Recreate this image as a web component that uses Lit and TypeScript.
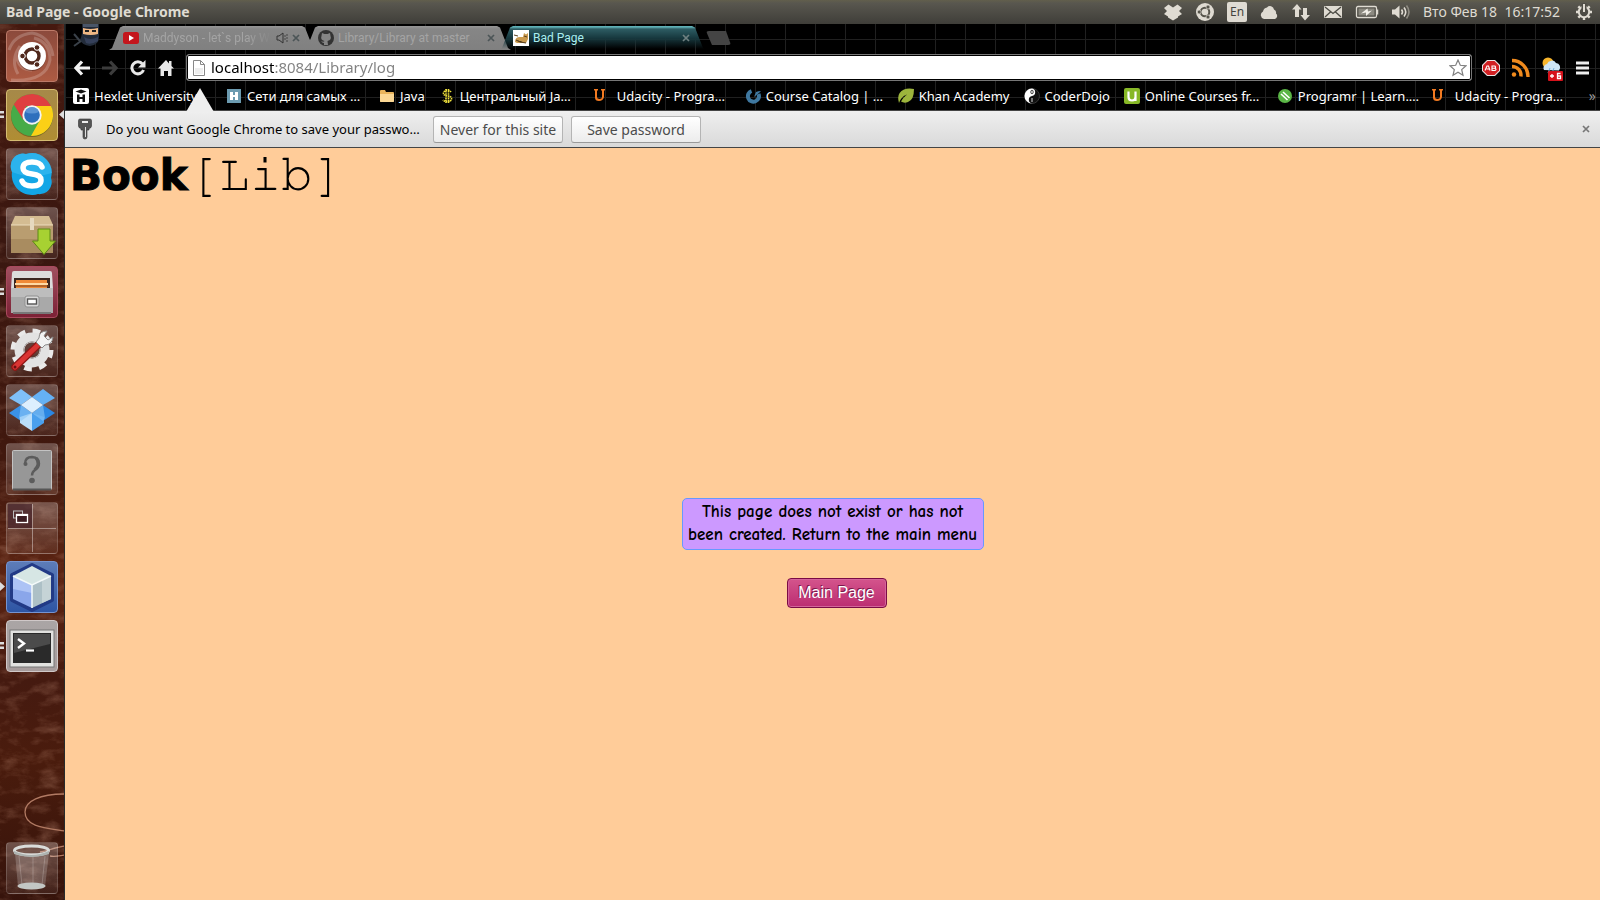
import { LitElement, html, css, svg } from "lit";
import { customElement } from "lit/decorators.js";
import { classMap } from "lit/directives/class-map.js";

const icon = (w: number, h: number, body: unknown, box = `0 0 ${w} ${h}`) =>
  html`<svg width=${w} height=${h} viewBox=${box} aria-hidden="true">${body}</svg>`;

/* ---------- top panel indicators ---------- */
const indicators = [
  { name: "Dropbox", art: icon(20, 24, svg`<g fill="#dfdbd2"><path d="m5.500 4.500 4.500 3 4.500-3 4.500 3.500-3 3 3 3-4 2.500v1L10 20.500l-5-3v-1L1 14l3-3-3-3z"/></g>`) },
  { name: "Ubuntu One", art: icon(20, 24, svg`<circle cx="10" cy="12" r="9" fill="#dfdbd2"/><circle cx="10" cy="12" r="4.300" fill="none" stroke="#55534a" stroke-width="2"/><g fill="#55534a" stroke="#dfdbd2" stroke-width=".7"><circle cx="4.200" cy="12" r="2"/><circle cx="13" cy="7" r="2"/><circle cx="13" cy="17" r="2"/></g>`) },
  { name: "Keyboard layout", art: html`<span class="lang">En</span>` },
  { name: "Cloud", art: icon(20, 24, svg`<path d="M5 19a4 4 0 0 1-1-7.500A5 5 0 0 1 8 7.500a4 4 0 0 1 7 2 3.500 3.500 0 0 1 2 4A3.200 3.200 0 0 1 16 19z" fill="#dfdbd2"/>`) },
  { name: "Network", art: icon(20, 24, svg`<path d="M6 4 10.500 9.500H8V17H4V9.500H1zM14 20.500 9.500 15H12V8h4v7h3z" fill="#dfdbd2"/>`) },
  { name: "Mail", art: icon(20, 24, svg`<rect x="1" y="6" width="18" height="12" rx="1" fill="#dfdbd2"/><path d="m2 7 8 6.500L18 7M2 17l6-5.500M18 17l-6-5.500" fill="none" stroke="#4b4a43" stroke-width="1.300"/>`) },
  { name: "Battery", art: icon(24, 24, svg`<rect x="1.500" y="6.500" width="20" height="11" rx="1.500" fill="none" stroke="#dfdbd2" stroke-width="1.300"/><path d="M22.500 9.500v5" stroke="#dfdbd2" stroke-width="1.500"/><rect x="3.500" y="8.500" width="16" height="7" fill="#8b8980"/><path d="m6 13.500 6.500-5 .5 3 4-1-6 5.500v-3.500z" fill="#f2efe8"/>`) },
  { name: "Sound", art: icon(20, 24, svg`<path d="M1 9.500h3L8.500 5.500v13L4 14.500H1z" fill="#dfdbd2"/><g fill="none" stroke="#dfdbd2" stroke-width="1.600"><path d="M10.500 9.500q2 2.500 0 5"/><path d="M13 7.500q3.500 4.500 0 9"/><path d="M15.500 5.500q5 6.500 0 13" stroke="#8f8c83"/></g>`) },
];

const gear = icon(20, 24, svg`<circle cx="10" cy="12" r="5.200" fill="none" stroke="#dfdbd2" stroke-width="2"/><g stroke="#dfdbd2" stroke-width="2.400"><path d="M10 20v-2.500M2 12h2.500M18 12h-2.500M4.300 6.300l1.800 1.800M15.700 6.300l-1.800 1.800M4.300 17.700l1.800-1.800M15.700 17.700l-1.800-1.800"/></g><path d="M10 3v9" stroke="#4f4d46" stroke-width="5"/><path d="M10 4v8" stroke="#dfdbd2" stroke-width="2"/>`);

/* ---------- launcher ---------- */
const launcher = [
  { name: "Dash home", tone: "dash", run: 0, art: svg`
    <path d="M3 20Q8 5 26 3 44 6 47 26M12 44Q4 30 14 16M26 40q-14 0-16-16" fill="none" stroke="#fff" stroke-opacity=".2" stroke-width="3"/>
    <path d="M5 50Q40 52 44 30 44 12 28 8" fill="none" stroke="#fff" stroke-opacity=".2" stroke-width="3"/>
    <circle cx="26" cy="27" r="14" fill="#4a2018" opacity=".5"/><circle cx="26" cy="26" r="14" fill="#fff"/>
    <circle cx="26" cy="26" r="7" fill="none" stroke="#50281c" stroke-width="3.400"/>
    <g fill="#50281c" stroke="#fff" stroke-width="1"><circle cx="16.500" cy="26" r="2.800"/><circle cx="31" cy="17.500" r="2.800"/><circle cx="31" cy="34.500" r="2.800"/></g>` },
  { name: "Google Chrome", tone: "gold", run: 2, art: svg`
    <circle cx="26" cy="27" r="21" fill="#5b4818" opacity=".6"/>
    <circle cx="26" cy="26" r="21" fill="#46ab48"/>
    <path d="M26 17h19A21 21 0 0 1 25 47l9-16z" fill="#fbd016"/>
    <path d="M7.800 15.500 17.500 31 20 17h25A21 21 0 0 0 7.800 15.500" fill="#df3f40"/>
    <circle cx="26" cy="26" r="9.700" fill="#f3f3f3"/><circle cx="26" cy="26" r="7.800" fill="#2e6fbd"/><path d="M19 23a7.500 7.500 0 0 1 14 0q-7 3-14 0" fill="#5b93d3"/>` },
  { name: "Skype", tone: "clear", run: 0, art: svg`
    <path d="M5 16A12 12 0 0 1 20 6 20 20 0 0 1 45 30 12 12 0 0 1 32 46 20 20 0 0 1 6 24 12 12 0 0 1 5 16" fill="#13a6e6"/>
    <path d="M5 16A12 12 0 0 1 20 6 20 20 0 0 1 46 25Q25 32 6 24 4 20 5 16" fill="#3dbcf1" opacity=".6"/>
    <path d="M36 19q-2-5-10-5-9 0-9 6 0 5 9 6 9 1 9 6 0 6-9 6-8 0-10-5" fill="none" stroke="#fff" stroke-width="5.500" stroke-linecap="round"/>` },
  { name: "Software updater", tone: "clear", run: 0, art: svg`
    <path d="M5 18 9 9h34l4 9z" fill="#d4bc92"/><path d="M5 18h42v28H5z" fill="#b99d70"/><path d="M5 32h42v14H5z" fill="#a98c60"/>
    <path d="M5 18h42" stroke="#ecdcbc"/><path d="M24 11h4v12h-4z" fill="#e6d9bf"/>
    <path d="M32 22h12v12h5.500L38 47.500 26.500 34H32z" fill="#a7d132" stroke="#5c8a14" stroke-width="1"/>` },
  { name: "Files", tone: "wine", run: 2, art: svg`
    <path d="M6 7q0-2 2-2h36q2 0 2 2l1 16H5z" fill="#dcdcdc"/><path d="M8 12h36v12H8z" fill="#3a2620"/>
    <path d="M10 14h31v9H10z" fill="#f08a38"/><path d="M9 17h33v2H9z" fill="#ffd9a4"/><path d="M9 20h34" stroke="#7a3d16"/>
    <path d="M5 22h42v25H5z" fill="#a9a9a9"/><path d="M5 22h42v9H5z" fill="#bdbdbd"/><path d="M7 47h38" stroke="#787878" stroke-width="2"/>
    <rect x="19" y="30" width="14" height="11" rx="2" fill="#d8d8d8" stroke="#8f8f8f"/><rect x="21.500" y="33" width="9" height="5" fill="#fff" stroke="#555" stroke-width="1.400"/>` },
  { name: "System settings", tone: "clear", run: 0, art: svg`
    <circle cx="26" cy="25" r="17.500" fill="none" stroke="#e9e9e9" stroke-width="8" stroke-dasharray="7 6.745"/>
    <circle cx="26" cy="25" r="13" fill="none" stroke="#e2e2e2" stroke-width="9"/><circle cx="26" cy="25" r="8" fill="none" stroke="#bdbdbd"/>
    <path d="M9 42 32 20" stroke="#8e1716" stroke-width="7.500" stroke-linecap="round"/><path d="M9 42 32 20" stroke="#da3432" stroke-width="5" stroke-linecap="round"/>
    <path d="m30 17 6 6 3-3q7 0 8-8l-5 3-4-4 3-5q-8 0-8 7z" fill="#f2f2f2" stroke="#8a8a8a"/><circle cx="9" cy="42" r="1.500" fill="#6b1010"/>` },
  { name: "Dropbox", tone: "clear", run: 0, art: svg`
    <path d="M15 5 26 13 15 21 3 14z" fill="#7fc0f8"/><path d="M37 5 26 13 37 21 49 14z" fill="#65b1f4"/>
    <path d="M3 29 15 21 26 29 15 37z" fill="#3a92e8"/><path d="M49 29 37 21 26 29 37 37z" fill="#2b87e2"/>
    <path d="m15 21 11-8 11 8-11 8z" fill="#dceffe"/>
    <path d="m14 33 12-4v18l-12-8z" fill="#bbdffb"/><path d="m38 33-12-4v18l12-8z" fill="#4aa0ee"/><path d="m15 21 11 8-11 8-2-3zM37 21l-11 8 11 8 2-3z" fill="#8bc6f7" opacity=".6"/>` },
  { name: "Unknown application", tone: "clear", run: 0, art: svg`
    <rect x="6.500" y="7.500" width="39" height="39" rx="1" fill="#979797" stroke="#c3c3c3"/><path d="M7 46.500h38" stroke="#565656" stroke-width="2"/>
    <path d="M19 21q0-7 7-7 7 .5 7 6.500 0 4-4 6.500-3 2-3 5.500" fill="none" stroke="#5c5c5c" stroke-width="2.400"/><path d="M30 15q5 6-1.500 12" fill="none" stroke="#5c5c5c" stroke-width="3"/><circle cx="19.500" cy="21" r="2" fill="#5c5c5c"/><circle cx="26" cy="37.500" r="2.800" fill="#5c5c5c"/>` },
  { name: "Workspace switcher", tone: "clear", run: 0, art: svg`
    <path d="M26.500 2v48M2 26.500h48" stroke="#fff" stroke-opacity=".4"/><path d="M2 2h24v24H2z" fill="#3d1a24" opacity=".6"/>
    <rect x="7.500" y="9" width="9" height="7" fill="none" stroke="#bbb"/><rect x="10.500" y="12.500" width="11" height="8" fill="#3c1d22" stroke="#fff" stroke-width="1.300"/><path d="M10 13h12" stroke="#fff" stroke-width="2"/>` },
  { name: "NetBeans", tone: "blue", run: 3, art: svg`
    <path d="M26 4 46 14v25L26 49 6 39V14z" fill="#1c2f77" stroke="#223a86" stroke-width="4" stroke-linejoin="round"/>
    <path d="M26 5 45 15 26 24 7 15z" fill="#d6e6e4"/><path d="m7 15 19 9v23L7 38z" fill="#8aa6ea"/><path d="m7 15 19 9v8L7 28z" fill="#adc3f5"/><path d="m45 15-19 9v23l19-9z" fill="#adc0c6"/><path d="m45 15-9 4v23l9-4z" fill="#c5d3d6"/><path d="m7 15 19 9 19-9M26 24v23" fill="none" stroke="#f4fafa" stroke-width="1.500"/>` },
  { name: "Terminal", tone: "silver", run: 2, art: svg`
    <rect x="4" y="10" width="44" height="37" fill="#e2e2e0" stroke="#777"/><rect x="7" y="13" width="38" height="30" fill="#2a2a2a"/><path d="M8 14h36v10L8 33z" fill="#4b4b4b"/>
    <path d="m12 19 6 4.500-6 4.500" fill="none" stroke="#fff" stroke-width="2.400"/><path d="M20 30.500h8" stroke="#fff" stroke-width="2.200"/>` },
];

const trash = svg`
  <path d="M9 11h34l-4 34H12z" fill="#fff" fill-opacity=".2"/><path d="M13 14l3 29M39 14l-3 29M27 15v28" stroke="#fff" stroke-opacity=".2"/>
  <ellipse cx="25.500" cy="44" rx="14" ry="3.500" fill="#c3c7c4"/><ellipse cx="25.500" cy="8.500" rx="17" ry="4.500" fill="none" stroke="#dadcda" stroke-width="3"/>
  <path d="M8 9q17 8 35 0v3q-17 6-35 0z" fill="#aeb3b0"/>`;

/* ---------- browser ---------- */
const tabs = [
  { title: "Maddyson - let`s play W", active: false, audio: true, art: icon(16, 16, svg`<rect y="2" width="16" height="12" rx="2.500" fill="#c4161c"/><path d="m6 5 5 3-5 3z" fill="#fff"/>`) },
  { title: "Library/Library at master", active: false, audio: false, art: icon(16, 16, svg`<circle cx="8" cy="8" r="8" fill="#333"/><path d="M4 3l2.500 1h3L12 3l.5 3q1.500 4-3 5l.5 4H6v-2q-2 0-3-2 1.500 1 3 .5L6.500 11Q2 10 3.500 6z" fill="#858585"/>`) },
  { title: "Bad Page", active: true, audio: false, art: icon(16, 16, svg`<path d="M0 0h16v16H0z" fill="#fff"/><path d="M2 12q0-5 5-5l3 0 1-4 2 1.500L15 3v6l-2 4H4z" fill="#c99a4e"/><path d="M1 5l4 1M3 10l4 2 6 1M11 6l3 1" stroke="#5b4322"/>`) },
];

const uLetter = svg`<path d="M2 1h4v1.500H5V9q0 2 2.500 2T10 9V2.500H9V1h4v1.500h-1V9q-1 4-5 4T3 9.500V2.500H2z" fill="#f27a21"/>`;

const bookmarks = [
  { title: "Hexlet University…", wide: true, art: svg`<rect width="16" height="16" rx="2" fill="#fff"/><path d="m2.500 3.500 5.500-2 5.500 2-5.500 2zM4 6.500h2.500V9h3V6.500H12V14H9.500v-3h-3v3H4z" fill="#111"/>` },
  { title: "Сети для самых …", wide: true, art: svg`<path d="M1 1h14v14H1z" fill="#6c9bb0"/><path d="M4 4h3v3h2V4h3v8H9V9H7v3H4z" fill="#fff"/>` },
  { title: "Java", wide: false, art: svg`<path d="M1 3q0-1 1-1h4l1 2h7q1 0 1 1v8q0 1-1 1H2q-1 0-1-1z" fill="#e9b45c"/><path d="M1 6h14v7q0 1-1 1H2q-1 0-1-1z" fill="#fbd794"/>` },
  { title: "Центральный Ja…", wide: true, art: svg`<path d="M12 4q-1-1.500-4-1.500T4.500 5t4 3 4 3-4 2.500T4 12M7 1v14M9.500 1v14" fill="none" stroke="#f0e23c" stroke-width="1.600" stroke-dasharray="1.500 .6"/>` },
  { title: "Udacity - Progra…", wide: true, roomy: true, art: uLetter },
  { title: "Course Catalog | …", wide: true, art: svg`<path d="M6.500 3A5.500 5.500 0 1 0 13.500 6" fill="none" stroke="#3f78a0" stroke-width="4"/><path d="M9 9 14 5l2-2q-3 0-5 1z" fill="#3f78a0"/>` },
  { title: "Khan Academy", wide: false, art: svg`<path d="M1 15Q-2 5 6 1.500 10 0 16 1q0 11-6 13-4 1.500-7-.5 2-4 6-7-6 2-8 8.500" fill="#9cb43c"/>` },
  { title: "CoderDojo", wide: false, art: svg`<circle cx="8" cy="8" r="7.500" fill="#111" stroke="#555" stroke-width=".6"/><path d="M8 .5a7.500 7.500 0 0 0 0 15 3.800 3.800 0 0 1 0-7.500 3.800 3.800 0 0 0 0-7.500" fill="#fff"/><ellipse cx="8" cy="4" rx="1.200" ry="1.800" fill="none" stroke="#444"/><path d="M8 10v4" stroke="#ddd"/>` },
  { title: "Online Courses fr…", wide: true, art: svg`<rect width="16" height="16" rx="2" fill="#87b827"/><path d="M4.500 3.500V9q0 3.500 3.500 3.500T11.500 9V3.500M11.500 9v4" fill="none" stroke="#fff" stroke-width="2.200"/>` },
  { title: "Programr | Learn.…", wide: true, art: svg`<circle cx="8" cy="8" r="7" fill="#5ab646"/><path d="m4 6 6.500 6M6 4l6.500 6" stroke="#fff" stroke-width="1.600"/>` },
  { title: "Udacity - Progra…", wide: true, roomy: true, art: uLetter },
];

@customElement("app-root")
export class AppRoot extends LitElement {
  static styles = css`
    :host { display: block; --ui: "Noto Sans", "Open Sans", sans-serif; font-family: var(--ui); }
    * { box-sizing: border-box; }
    button { font: inherit; border: 0; padding: 0; background: none; color: inherit; }
    svg { display: block; flex: none; }
    .desktop { min-height: 100vh; display: flex; flex-direction: column; }

    .panel { height: 24px; display: flex; align-items: center; gap: 12px; padding: 0 6px; color: #dfdbd2;
      background: linear-gradient(#625f4c, #59574f 3px, #3f3e39); }
    .panel h1 { margin: 0 auto 0 0; font: bold 14px/24px var(--ui); }
    .lang { display: block; width: 20px; height: 20px; border-radius: 2px; background: #dfdbd2; color: #45443e; font-size: 12px; line-height: 20px; text-align: center; }
    .clock { min-width: 139px; font-size: 14px; line-height: 22px; white-space: pre; }

    .body { flex: 1; display: flex; }
    .launcher { position: relative; flex: none; width: 65px; padding: 6px 6px; display: flex; flex-direction: column; gap: 7px;
      border-right: 1px solid #262b2c; overflow: hidden;
      background: linear-gradient(#46190f, #3a1710 25%, #41180e 50%, #5c2412 63%, #451a10 75%, #4a1c0d 84%, #36130b); }
    .rock { position: absolute; left: 0; top: 0; width: 100%; height: 100%; }
    .tile { position: relative; width: 52px; height: 52px; border-radius: 4px; border: 1px solid rgba(255,255,255,.16);
      background: linear-gradient(rgba(255,255,255,.26), rgba(255,255,255,.06)); }
    .tile.last { margin-top: auto; }
    .tile svg { margin: -1px; }
    .tile.dash { background: linear-gradient(#8c4a3c, #ad5b43); border-color: #bd7a68; }
    .tile.gold { background: linear-gradient(#a68949, #b08d33); border-color: #d6bd72; }
    .tile.wine { background: linear-gradient(#a0505f, #7c2135); border-color: #a8495d; }
    .tile.blue { background: linear-gradient(#5d7cb8, #2e55a4); border-color: #7694d0; }
    .tile.silver { background: linear-gradient(#aaa5a5, #a79c9c); border-color: #d0c8c8; }
    .mark { position: absolute; left: -6px; top: 21px; }
    .focus { position: absolute; right: -6px; top: 21px; }

    .window { flex: 1; min-width: 0; display: flex; flex-direction: column; }
    .chrome { background-color: #000;
      background-image: linear-gradient(90deg, #202020 1px, transparent 1px), linear-gradient(#202020 1px, transparent 1px);
      background-size: 30px 29px; background-position: 0 0, 0 15px; }
    .tabs { height: 28px; display: flex; align-items: flex-start; padding: 2px 0 0 8px; }
    .ninja { margin: -2px 8px 0 0; }
    .tab { width: 207px; height: 24px; margin-right: -12px; display: flex; align-items: center; gap: 4px; padding: 0 16px 0 14px;
      font: 12px/24px Roboto, sans-serif; color: #a4a4a4; background: linear-gradient(#979797, #868686 3px, #808080);
      clip-path: polygon(0 100%, 3px 92%, 11px 6%, 14px 0, calc(100% - 14px) 0, calc(100% - 11px) 6%, calc(100% - 3px) 92%, 100% 100%); }
    .tab.active { color: #a9eef0; background: linear-gradient(#5fb0b6 1px, #2d5c63 3px, #17383e 12px, rgba(0,0,0,0) 23px); }
    .tab .name { flex: 1; min-width: 0; white-space: nowrap; text-align: left; }
    .fade .name { mask-image: linear-gradient(90deg, #000 80%, transparent); }
    .newtab { width: 25px; height: 14px; margin: 5px 0 0 12px; background: #444; clip-path: polygon(0 0, 80% 0, 100% 100%, 24% 100%); border-radius: 3px; }

    .toolbar { display: flex; align-items: center; gap: 12px; padding: 2px 8px 2px 9px; height: 31px; }
    .toolbar .nav { width: 16px; height: 16px; }
    .omni { flex: 1; display: flex; align-items: center; height: 27px; padding: 0 4px; gap: 4px; background: #fff; border: 1px solid #777; border-radius: 3px; box-shadow: inset 0 0 0 1px #000; }
    .omni input { flex: 1; min-width: 0; border: 0; outline: 0; padding: 0; height: 23px; font: 15px/23px var(--ui);
      color: transparent; background: linear-gradient(90deg, #000 63px, #808080 63px); -webkit-background-clip: text; background-clip: text; }
    .ext { display: flex; gap: 7px; margin-left: -3px; }

    .bookmarks { display: flex; align-items: center; height: 28px; padding: 0 4px 2px 8px; font-size: 13px; color: #fff; border-bottom: 1px solid #444; }
    .bookmarks a { flex: none; display: flex; align-items: center; gap: 5px; padding-right: 14px; color: inherit; text-decoration: none; white-space: nowrap; }
    .bookmarks a.wide { width: 153px; padding-right: 0; }
    .bookmarks a.roomy { gap: 9px; }
    .more { margin-left: auto; color: #999; font-size: 14px; }

    .infobar { position: relative; height: 37px; display: flex; align-items: center; padding: 0 10px 0 12px; font-size: 13px; color: #000;
      background: linear-gradient(#efefef, #d9d9d9); border-bottom: 1px solid #444; }
    .pointer { position: absolute; left: 121px; top: -23px; }
    .infobar p { margin: 0 0 0 13px; width: 327px; }
    .infobar .act { width: 130px; height: 27px; margin-right: 8px; border: 1px solid #b4b4b4; border-bottom-color: #999; border-radius: 3px; font-size: 14px; color: #4c4c4c; background: linear-gradient(#fff, #ececec); white-space: nowrap; }
    .x { margin-left: auto; }

    .page { flex: 1; background: #fc9; display: flex; flex-direction: column; color: #000; }
    .logo { margin: 0; padding: 0 5px; height: 60px; display: flex; align-items: baseline; font: bold 42px/52px "DejaVu Sans", sans-serif; -webkit-text-stroke: 1px #000; }
    .thin { font: 52px/52px "Nimbus Mono PS", "FreeMono", "Courier Prime", "Liberation Mono", monospace; -webkit-text-stroke: 0; }
    .main { display: flex; flex-direction: column; align-items: center; gap: 28px; margin-top: 290px; }
    .msg { margin: 0; padding: 1px 4px 3px; border: 1px solid #69f; border-radius: 5px; background: #c9f; text-align: center; font: bold 17px/23px "Comic Neue", "Comic Sans MS", Lato, sans-serif; min-width: 302px; }
    .home { padding-left: 8px; }
    .home button { width: 100px; height: 30px; border: 1px solid #7b0b45; border-radius: 4px; color: #fff; font: 16px/28px "Liberation Sans", sans-serif; text-shadow: -1px -1px 0 #7b1849;
      background: linear-gradient(#d4548c, #bb2d71); box-shadow: inset 0 0 0 1px #d3659a; }
  `;

  private mark(run: number) {
    if (!run) return null;
    return html`<svg class="mark" width="5" height="9" aria-hidden="true">${run === 3
      ? svg`<path d="M0 0 5 4.500 0 9z" fill="#ddd"/>`
      : svg`<path d="M0 1h4v2.500H0zM0 5.500h4V8H0z" fill="#ddd"/>`}</svg>`;
  }

  private close(color: string) {
    return icon(8, 8, svg`<path d="m1 1 6 6M7 1 1 7" stroke=${color} stroke-width="1.700"/>`);
  }

  render() {
    return html`<div class="desktop">
      <header class="panel">
        <h1>Bad Page - Google Chrome</h1>
        ${indicators.map((i) => html`<button aria-label=${i.name}>${i.art}</button>`)}
        <time class="clock">Вто Фев 18  16:17:52</time>
        <button aria-label="Session">${gear}</button>
      </header>
      <div class="body">
        <nav class="launcher" aria-label="Launcher">
          <svg class="rock" aria-hidden="true">
            <filter id="grain" x="0" y="0" width="100%" height="100%"><feTurbulence type="fractalNoise" baseFrequency=".05 .1" numOctaves="5" seed="4"/><feColorMatrix values="0 0 0 0 .5  0 0 0 0 .25  0 0 0 0 .17  1.8 0 0 0 -.8"/></filter>
            <rect width="100%" height="100%" filter="url(#grain)" opacity=".4"/>
            <path d="M65 770C40 770 25 777 25 788 25 803 45 804 65 807M65 822C55 823 48 827 40 828M65 831C58 832 55 833 50 832" fill="none" stroke="#b17a63" stroke-width="1.300"/>
          </svg>
          ${launcher.map((l) => html`<button class="tile ${l.tone}" aria-label=${l.name}>
            ${this.mark(l.run)}${icon(52, 52, l.art)}
            ${l.tone === "gold" ? html`<svg class="focus" width="5" height="9" aria-hidden="true"><path d="M5 0 0 4.500 5 9z" fill="#ddd"/></svg>` : null}
          </button>`)}
          <button class="tile last" aria-label="Trash">${icon(52, 52, trash)}</button>
        </nav>
        <div class="window">
          <div class="chrome">
            <div class="tabs">
              <svg class="ninja" width="28" height="25" aria-hidden="true"><path d="M9 0h17v13q0 8-9 9-8-1-10-6 3-6 2-16" fill="#232c3a"/><path d="M10 0h15v3H10z" fill="#4a5668"/><path d="M10 4q7 2 15 0v6q-7 2-15 0z" fill="#f0b884"/><path d="M12 7h4M19 7h4" stroke="#222" stroke-width="2"/><path d="M11 13q6 4 14 0v4q-7 4-12 2z" fill="#35405a"/><path d="m1 10 6 7M1 22l7-5" stroke="#3a4149" stroke-width="2"/></svg>
              ${tabs.map((t) => html`<button class=${classMap({ tab: true, active: t.active, fade: t.audio })}>
                ${t.art}<span class="name">${t.title}</span>
                ${t.audio ? icon(12, 12, svg`<path d="M1 4h2l4-3v10L3 8H1z" fill="none" stroke="#333"/><path d="M9 3v6M11 2v8" stroke="#444" stroke-dasharray="2 1"/>`) : null}
                ${this.close(t.active ? "#6f8081" : "#4c5557")}
              </button>`)}
              <button class="newtab" aria-label="New tab"></button>
            </div>
            <div class="toolbar">
              <button class="nav" aria-label="Back">${icon(16, 16, svg`<path d="m8 1.500-6 6.500 6 6.500M2.500 8H16" fill="none" stroke="#f2f2f2" stroke-width="3.200"/>`)}</button>
              <button class="nav" aria-label="Forward">${icon(16, 16, svg`<path d="m8 1.500 6 6.500-6 6.500M13.500 8H0" fill="none" stroke="#3c3c3c" stroke-width="3.200"/>`)}</button>
              <button class="nav" aria-label="Reload">${icon(16, 16, svg`<path d="M12.500 4A6 6 0 1 0 13.500 10" fill="none" stroke="#e8e8e8" stroke-width="3"/><path d="M15.500 0v7.500H8z" fill="#e8e8e8"/>`)}</button>
              <button class="nav" aria-label="Home">${icon(16, 16, svg`<path d="M8 0 0 8.500h2.500V16H6v-5h4v5h3.500V8.500H16L13.500 6V1h-2.500v2.500z" fill="#e8e8e8"/>`)}</button>
              <div class="omni">
                ${icon(16, 16, svg`<path d="M2.500.5h7l4 4v11h-11z" fill="#fff" stroke="#888"/><path d="M9.500.5v4h4" fill="none" stroke="#888"/><path d="M4 8h8v6H4z" fill="#eee"/>`)}
                <input aria-label="Address" value="localhost:8084/Library/log" spellcheck="false" />
                <button aria-label="Bookmark this page">${icon(18, 18, svg`<path d="m9 1 2.300 5.300 5.700.5-4.300 3.800 1.300 5.700L9 13.300l-5 3 1.300-5.700L1 6.800l5.700-.5z" fill="#fff" stroke="#808080" stroke-width="1.200"/>`)}</button>
              </div>
              <div class="ext">
                <button aria-label="AdBlock">${icon(20, 24, svg`<path d="M6 4h8l5 5v6l-5 5H6l-5-5V9z" fill="#e9e2e2"/><path d="M6.500 5h7L18 9.500v5L13.500 19h-7L2 14.500v-5z" fill="#d11f22"/><path d="M4 14.500 6 10h1.500l1.500 4.500M5.500 13H8M11 10v4.500h3q2-1 0-2.300h-3 2.800q1.500-1 0-2.200z" fill="none" stroke="#fff" stroke-width="1.100"/>`)}</button>
                <button aria-label="RSS">${icon(24, 24, svg`<g fill="none" stroke="#f08a1d" stroke-width="3.400"><path d="M4 10.500a9 9 0 0 1 9 10"/><path d="M4 4.500a16 16 0 0 1 16 16.500"/></g><circle cx="6" cy="18.500" r="2.200" fill="#f08a1d"/>`)}</button>
                <button aria-label="Weather">${icon(26, 28, svg`<circle cx="9" cy="9" r="5.500" fill="#f7b52c"/><path d="M5 16a4 4 0 0 1 3-6 5 5 0 0 1 9-1 4.500 4.500 0 0 1 3 7.500z" fill="#cfe6f6"/><path d="M9 19l2-5M13 19l2-5" stroke="#78b3df"/><rect x="9" y="17" width="15" height="10" rx="1" fill="#d6121b"/><path d="M11 22h4M13 20v4M21.500 19.500h-3v5h3v-2.500h-3" fill="none" stroke="#fff" stroke-width="1.300"/>`)}</button>
                <button aria-label="Menu">${icon(20, 24, svg`<path d="M4 7h13M4 12h13M4 17h13" stroke="#eee" stroke-width="3.200"/>`)}</button>
              </div>
            </div>
            <nav class="bookmarks" aria-label="Bookmarks">
              ${bookmarks.map((b) => html`<a href="#" class=${classMap({ wide: b.wide, roomy: !!b.roomy })}>${icon(16, 16, b.art)}<span>${b.title}</span></a>`)}
              <button class="more" aria-label="More bookmarks">»</button>
            </nav>
          </div>
          <div class="infobar">
            <svg class="pointer" width="28" height="24" aria-hidden="true"><path d="M0 24 14 0 28 24z" fill="#eee"/></svg>
            ${icon(16, 22, svg`<path d="M3 1h10q1.500 0 1.500 1.500V8q0 2-2.500 2.500V12h-2v7q0 2-2 2t-2-2v-7H4v-1.500Q1.500 10 1.500 8V2.500Q1.500 1 3 1" fill="#555" stroke="#333" stroke-width=".6"/><path d="M5 4h6" stroke="#eee" stroke-width="2"/><path d="M8.500 9v10" stroke="#ddd"/>`)}
            <p>Do you want Google Chrome to save your passwo…</p>
            <button class="act">Never for this site</button>
            <button class="act">Save password</button>
            <button class="x" aria-label="Close">${this.close("#777")}</button>
          </div>
          <main class="page">
            <h2 class="logo">Book<span class="thin">[Lib]</span></h2>
            <div class="main">
              <p class="msg">This page does not exist or has not<br />been created. Return to the main menu</p>
              <div class="home"><button>Main Page</button></div>
            </div>
          </main>
        </div>
      </div>
    </div>`;
  }
}
